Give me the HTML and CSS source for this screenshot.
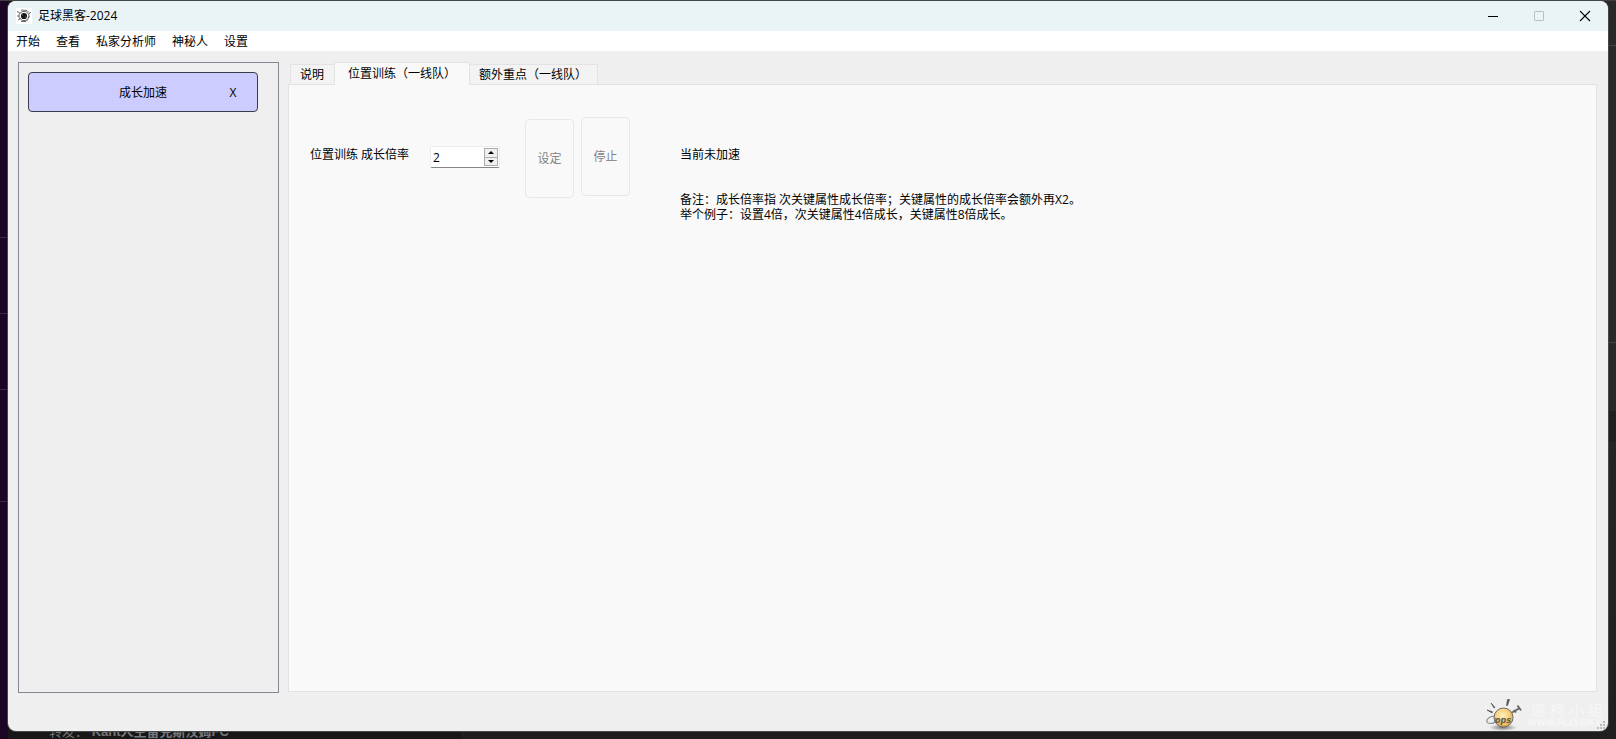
FILE: index.html
```html
<!DOCTYPE html>
<html lang="zh-CN">
<head>
<meta charset="utf-8">
<title>足球黑客-2024</title>
<link rel="stylesheet" href="styles.css">
</head>
<body>
<div class="desktop">
  <div class="backdrop" aria-hidden="true">
    <i class="rule rule-a"></i><i class="rule rule-b"></i><i class="rule rule-c"></i><i class="rule rule-d"></i>
    <i class="rule rule-right rule-e"></i><i class="rule rule-right rule-f"></i>
    <p class="behind-text">转发： <b>Kant人主雷克斯汉姆FC</b></p>
  </div>
  <div class="window">
    <header class="titlebar">
      <svg class="app-icon" viewBox="0 0 16 16" aria-hidden="true">
        <rect width="16" height="16" fill="#fff"/>
        <g fill="none" stroke="#444">
          <ellipse cx="8" cy="8" rx="5" ry="4.600" stroke-width=".8"/>
          <path d="M1 3.500l3 1.500M1 8h2M2 12l2.500-1.500M14.800 4l-2.300 2.500M12 10l1.500-2M5 2l6 .5 2 2M5 13.500h5l2-2" stroke-width=".8"/>
        </g>
        <circle cx="8" cy="8" r="3.100" fill="#161616"/>
        <path d="M6 7h1M9 9h1" stroke="#888" stroke-width=".8"/>
      </svg>
      <h1 class="title">足球黑客-2024</h1>
      <div class="caption-buttons">
        <button class="caption" aria-label="最小化"><svg viewBox="0 0 10 10"><path d="M0 5.500h10" stroke="#000"/></svg></button>
        <button class="caption" aria-label="最大化" disabled><svg viewBox="0 0 10 10"><rect x=".5" y=".5" width="9" height="9" rx=".6" fill="none" stroke="#b9c0c2"/></svg></button>
        <button class="caption" aria-label="关闭"><svg viewBox="0 0 10 10"><path d="M0 0l10 10M10 0L0 10" stroke="#000" stroke-width="1.100"/></svg></button>
      </div>
    </header>
    <nav class="menubar">
      <button>开始</button><button>查看</button><button>私家分析师</button><button>神秘人</button><button>设置</button>
    </nav>
    <main class="body">
      <aside class="sidebar">
        <div class="entry">
          <button class="entry-name">成长加速</button>
          <button class="entry-close" aria-label="关闭 成长加速">X</button>
        </div>
      </aside>
      <section class="tabs">
        <div class="tablist" role="tablist">
          <button class="tab" role="tab">说明</button>
          <button class="tab active" role="tab" aria-selected="true">位置训练（一线队）</button>
          <button class="tab" role="tab">额外重点（一线队）</button>
        </div>
        <div class="panel" role="tabpanel">
          <label class="rate-label" for="rate">位置训练 成长倍率</label>
          <div class="spin">
            <input id="rate" type="number" value="2">
            <div class="spin-buttons">
              <button aria-label="增加"><svg viewBox="0 0 6 3"><path d="M0 3l3-3 3 3z"/></svg></button>
              <button aria-label="减少"><svg viewBox="0 0 6 3"><path d="M0 0h6l-3 3z"/></svg></button>
            </div>
          </div>
          <div class="actions">
            <button class="action set" disabled>设定</button>
            <button class="action" disabled>停止</button>
          </div>
          <div class="info">
            <p class="status">当前未加速</p>
            <p>备注：成长倍率指 次关键属性成长倍率；关键属性的成长倍率会额外再X2。<br>举个例子：设置4倍，次关键属性4倍成长，关键属性8倍成长。</p>
          </div>
        </div>
      </section>
    </main>
    <div class="watermark">
      <svg class="mascot" viewBox="0 0 36 32" aria-hidden="true">
        <defs>
          <radialGradient id="ball" cx=".45" cy=".4" r=".6"><stop offset="0" stop-color="#fff0c0"/><stop offset=".6" stop-color="#f8cf7a"/><stop offset="1" stop-color="#dda64e"/></radialGradient>
          <radialGradient id="shade"><stop offset="0" stop-color="#777"/><stop offset="1" stop-color="#777" stop-opacity="0"/></radialGradient>
        </defs>
        <ellipse cx="17" cy="28.500" rx="14" ry="3.500" fill="url(#shade)"/>
        <circle cx="17.500" cy="18.500" r="9.500" fill="url(#ball)" stroke="#706b60"/>
        <path d="M5 4l3 5 1-.6zM21.500 0.500h2l-2 6h-1zM1 11l5 3 .5-1.200z" fill="#555" stroke="#555" stroke-width=".7"/>
        <path d="M26 13.500l7-4M31.500 6.500l3.500 5M28 11l2 2.500" stroke="#666" stroke-width="1.800"/>
        <path d="M9 17c-5 0-9 3-8 6 1 2 6 2 8 0s1-4-1-4" fill="none" stroke="#888" stroke-width="1.200"/>
        <text x="9" y="23.500" class="mascot-text">ops</text>
      </svg>
      <div class="mark-text">
        <div class="mark-name"><span>爆</span><span>柯</span><span>小</span><span>组</span></div>
        <div class="mark-url">WWW.PLAYGM.C</div>
      </div>
    </div>
    <svg class="grip" viewBox="0 0 8 8" aria-hidden="true"><path d="M6 0h2v2H6zM3 3h2v2H3zM6 3h2v2H6zM0 6h2v2H0zM3 6h2v2H3zM6 6h2v2H6z" fill="#bcbcbc"/></svg>
  </div>
</div>
</body>
</html>
```
FILE: styles.css
```css
* { box-sizing: border-box; }

body {
  margin: 0;
  font: 12px/15px "Open Sans", "Noto Sans CJK SC", sans-serif;
  color: #000;
}

button, input { font: inherit; color: inherit; }
button { padding: 0; border: 0; background: none; }
p, h1 { margin: 0; }

.desktop {
  position: relative;
  isolation: isolate;
  display: flex;
  min-height: 100vh;
  padding: 1px 8px 8px;
  overflow: hidden;
  background: linear-gradient(90deg, #1a0524 8px, #171717 8px, #171717 461px, #1e1e1e 461px);
}

.backdrop { position: absolute; inset: 0; z-index: -1; border-top: 1px solid #443d42; }
.backdrop::after {
  content: "";
  position: absolute;
  inset: 0 0 0 auto;
  width: 16px;
  background: linear-gradient(#292929 410px, #202020 410px, #202020 441px, #252525 441px, #202020);
}
.rule { position: absolute; left: 0; width: 8px; height: 1px; background: #3a2744; }
.rule-a { top: 236px; }
.rule-b { top: 312px; }
.rule-c { top: 388px; }
.rule-d { top: 500px; }
.rule-right { left: auto; right: 0; z-index: 1; background: #444; }
.rule-e { top: 44px; }
.rule-f { top: 341px; }
.behind-text {
  position: absolute;
  left: 49px;
  bottom: -3px;
  font: 13px/20px "Liberation Sans", "Noto Sans CJK SC", sans-serif;
  color: #777;
  white-space: pre;
}

.window {
  position: relative;
  flex: 1;
  display: flex;
  flex-direction: column;
  overflow: hidden;
  border-radius: 8px;
  background: #efefef;
  box-shadow: 0 0 0 1px #454848;
}

.titlebar { display: flex; align-items: center; height: 30px; padding-left: 8px; background: #eaf4f7; }
.app-icon { width: 16px; height: 16px; }
.title { flex: 1; margin-left: 6px; padding-bottom: 2px; font-size: 12px; font-weight: 400; }
.caption-buttons { display: flex; }
.caption { display: grid; place-items: center; width: 46px; height: 30px; }
.caption svg { width: 10px; height: 10px; overflow: visible; }

.menubar { display: flex; gap: 16px; height: 20px; padding: 0 8px; background: #fff; }

.body { flex: 1; display: flex; gap: 9px; padding: 11px 11px 38px 10px; }

.sidebar { width: 261px; padding: 9px; border: 1px solid #828790; }
.entry {
  display: grid;
  grid-template-columns: 1fr auto 1fr;
  width: 230px;
  height: 40px;
  border: 1px solid #3b3b4d;
  border-radius: 4px;
  background: #ccccff;
}
.entry-name { grid-column: 2; }
.entry-close { justify-self: end; width: 48px; }

.tabs { flex: 1; display: flex; flex-direction: column; padding-bottom: 1px; }
.tablist { display: flex; align-items: flex-end; padding-left: 2px; }
.tab { height: 20px; padding: 0 9px; border: 1px solid #e3e3e3; border-width: 1px 1px 0 0; background: #f3f3f3; }
.tab:first-child { padding-right: 10px; border-left-width: 1px; }
.tab:last-child { min-width: 128px; text-align: left; }
.tab.active { z-index: 1; height: 23px; margin: 0 0 -1px -1px; padding: 0 13px 2px; border-left-width: 1px; background: #f9f9f9; }

.panel { flex: 1; display: flex; align-items: flex-start; padding: 32px 21px; border: 1px solid #e3e3e3; background: #f9f9f9; }
.rate-label { width: 120px; margin-top: 30px; }
.spin {
  display: flex;
  width: 70px;
  height: 22px;
  margin-top: 29px;
  padding: 1px;
  border: 1px solid #ececec;
  border-bottom-color: #868686;
  border-radius: 2px;
  background: #fff;
}
.spin input { flex: 1; min-width: 0; padding: 0 1px; border: 0; outline: 0; background: none; appearance: textfield; }
.spin input::-webkit-inner-spin-button { appearance: none; margin: 0; }
.spin-buttons { display: grid; width: 14px; border: 1px solid #adadad; background: #f0f0f0; }
.spin-buttons button { display: grid; place-items: center; }
.spin-buttons button + button { border-top: 1px solid #adadad; }
.spin-buttons svg { width: 6px; height: 3px; }

.actions { display: flex; gap: 7px; margin-left: 25px; }
.action { width: 49px; height: 79px; border: 1px solid #e8e8e8; border-radius: 4px; color: #838383; }
.action.set { margin-top: 2px; }

.info { margin: 30px 0 0 50px; }
.status { margin-bottom: 30px; }

.watermark { position: absolute; right: 2px; bottom: 0; display: flex; align-items: center; gap: 6px; color: #f6f6f6; }
.mascot { width: 36px; height: 32px; }
.mascot-text { font: italic bold 8px "DejaVu Sans", sans-serif; fill: #5c5c4c; }
.mark-text { width: 78px; }
.mark-name { display: flex; gap: 4px; padding-left: 3px; font: 15px/18px "Noto Sans CJK SC", sans-serif; }
.mark-url { font: bold 8px/10px "DejaVu Sans", sans-serif; }
.grip { position: absolute; right: 3px; bottom: 2px; width: 8px; height: 8px; }
```
